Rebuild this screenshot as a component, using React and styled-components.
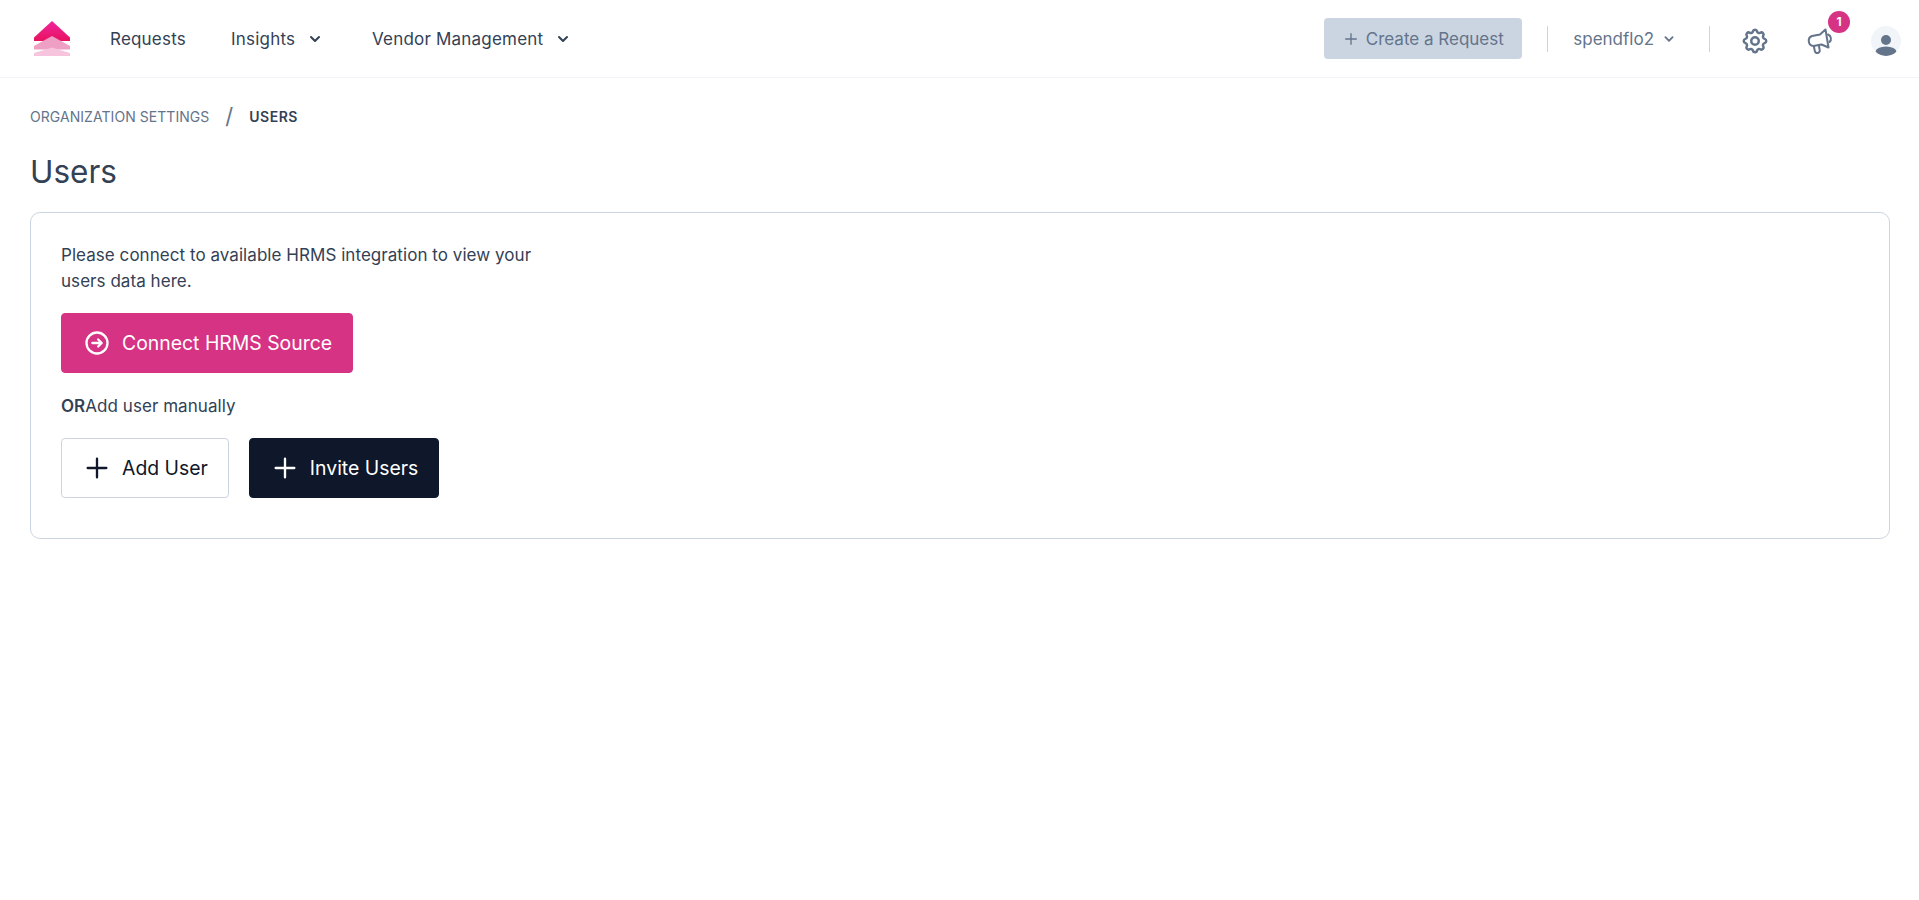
import React from "react";
import styled, { createGlobalStyle } from "styled-components";
import {
  HiOutlineCog,
  HiOutlineArrowCircleRight,
  HiOutlinePlus,
  HiChevronDown,
} from "react-icons/hi";

const GlobalStyle = createGlobalStyle`
  html, body {
    margin: 0;
    padding: 0;
    background: #fff;
    font-family: "Inter", "Noto Sans", sans-serif;
    color: #334155;
  }
  * { box-sizing: border-box; }
`;

const Logo = () => (
  <LogoSvg viewBox="0 0 36 35" aria-label="logo">
    <defs>
      <linearGradient id="topArrow" x1="0" y1="0" x2="0" y2="1">
        <stop offset="0" stopColor="#f0249f" />
        <stop offset="1" stopColor="#e8125f" />
      </linearGradient>
    </defs>
    <path d="M18 0 L36 16.5 V20 H0 V16.5 Z" fill="url(#topArrow)" />
    <path d="M18 15 L36 25 V28.5 H0 V25 Z" fill="#ee9fc4" />
    <path d="M18 26.5 L36 32 V35 H0 V32 Z" fill="#f6c4dd" />
  </LogoSvg>
);

const Megaphone = () => (
  <MegaphoneSvg viewBox="0 0 26 26" aria-label="announcements">
    <path d="M5 8 L13 6.5 L18.5 1.5 L21.5 19.5 L14.5 16.5 L6.5 18 A5.2 5.2 0 0 1 5 8 Z" />
    <path d="M6.8 18 L7.8 23 A2.5 2.5 0 0 0 12.7 22 L11.8 17" />
    <path d="M21 6.5 A4.5 4.5 0 0 1 22.5 14" />
  </MegaphoneSvg>
);

const Avatar = () => (
  <AvatarSvg viewBox="0 0 30 30" aria-label="user">
    <defs>
      <clipPath id="avatarClip">
        <circle cx="15" cy="15" r="15" />
      </clipPath>
    </defs>
    <circle cx="15" cy="15" r="15" fill="#f1f5f9" />
    <g clipPath="url(#avatarClip)" fill="#64748b">
      <circle cx="15" cy="14" r="5" />
      <ellipse cx="15" cy="26" rx="10.5" ry="5.5" />
    </g>
  </AvatarSvg>
);

const App = () => {
  return (
    <>
      <GlobalStyle />
      <Header>
        <Logo />
        <Nav>
          <NavItem $width="121px">Requests</NavItem>
          <NavItem $width="141px">
            Insights
            <NavChevron />
          </NavItem>
          <NavItem>
            Vendor Management
            <NavChevron />
          </NavItem>
        </Nav>
        <Actions>
          <CreateButton>
            <HiOutlinePlus />
            Create a Request
          </CreateButton>
          <Divider />
          <OrgSwitch>
            spendflo2
            <HiChevronDown />
          </OrgSwitch>
          <Divider $right="31px" />
          <IconSlot $size="30px">
            <HiOutlineCog />
          </IconSlot>
          <IconSlot $size="26px">
            <Megaphone />
            <Badge>1</Badge>
          </IconSlot>
          <Avatar />
        </Actions>
      </Header>

      <Main>
        <Breadcrumbs>
          <Crumb>ORGANIZATION SETTINGS</Crumb>
          <Slash>/</Slash>
          <Crumb $current>USERS</Crumb>
        </Breadcrumbs>
        <Title>Users</Title>
        <Card>
          <Message>
            Please connect to available HRMS integration to view your users data
            here.
          </Message>
          <Button $variant="pink">
            <HiOutlineArrowCircleRight />
            Connect HRMS Source
          </Button>
          <OrLine>
            <strong>OR</strong>Add user manually
          </OrLine>
          <ButtonRow>
            <Button $variant="outline">
              <HiOutlinePlus />
              Add User
            </Button>
            <Button $variant="dark">
              <HiOutlinePlus />
              Invite Users
            </Button>
          </ButtonRow>
        </Card>
      </Main>
    </>
  );
};

export default App;

const Header = styled.header`
  display: flex;
  align-items: center;
  height: 78px;
  padding: 0 18px 0 34px;
  border-bottom: 1px solid #f1f5f9;
`;

const LogoSvg = styled.svg`
  width: 36px;
  height: 35px;
  flex: none;
`;

const Nav = styled.nav`
  display: flex;
  align-items: center;
  margin-left: 40px;
`;

const NavItem = styled.div`
  display: flex;
  align-items: center;
  width: ${(p) => p.$width || "auto"};
  font-size: 17px;
  letter-spacing: 0.2px;
  color: #334155;
`;

const NavChevron = styled(HiChevronDown)`
  width: 20px;
  height: 20px;
  margin-left: 10px;
  color: #334155;
`;

const Actions = styled.div`
  display: flex;
  align-items: center;
  margin-left: auto;
`;

const CreateButton = styled.div`
  display: flex;
  align-items: center;
  justify-content: center;
  gap: 7px;
  width: 198px;
  height: 41px;
  border-radius: 4px;
  background: #cbd5e1;
  color: #64748b;
  font-size: 17px;

  svg {
    width: 16px;
    height: 16px;
  }
`;

const Divider = styled.div`
  width: 1px;
  height: 26px;
  margin: 0 ${(p) => p.$right || "25px"} 0 25px;
  background: #cbd5e1;
`;

const OrgSwitch = styled.div`
  display: flex;
  align-items: center;
  gap: 6px;
  margin-right: 6px;
  font-size: 17px;
  color: #64748b;

  svg {
    width: 18px;
    height: 18px;
  }
`;

const IconSlot = styled.div`
  position: relative;
  display: flex;
  justify-content: center;
  width: 28px;
  margin: 4px 37px 0 0;
  color: #64748b;

  > svg {
    width: ${(p) => p.$size};
    height: ${(p) => p.$size};
    flex: none;
  }
`;

const MegaphoneSvg = styled.svg`
  fill: none;
  stroke: #64748b;
  stroke-width: 2;
  stroke-linejoin: round;
  stroke-linecap: round;
`;

const Badge = styled.span`
  position: absolute;
  top: -17px;
  right: -16px;
  width: 22px;
  height: 22px;
  border-radius: 50%;
  background: #d63384;
  color: #fff;
  font-size: 12px;
  font-weight: 700;
  line-height: 22px;
  text-align: center;
`;

const AvatarSvg = styled.svg`
  width: 30px;
  height: 30px;
  margin-top: 4px;
  flex: none;
`;

const Main = styled.main`
  padding: 28px 29px 0 30px;
`;

const Breadcrumbs = styled.div`
  display: flex;
  align-items: center;
  height: 20px;
`;

const Crumb = styled.span`
  font-size: 14px;
  font-weight: ${(p) => (p.$current ? 600 : 400)};
  letter-spacing: ${(p) => (p.$current ? "0.5px" : "0.05px")};
  color: ${(p) => (p.$current ? "#334155" : "#64748b")};
`;

const Slash = styled.span`
  margin: 0 16px;
  font-size: 22px;
  color: #64748b;
`;

const Title = styled.h1`
  margin: 28px 0 22px;
  font-size: 31.5px;
  font-weight: 400;
  line-height: 36px;
  color: #334155;
`;

const Card = styled.section`
  height: 327px;
  padding: 29px 30px;
  border: 1px solid #cbd5e1;
  border-radius: 10px;
`;

const Message = styled.p`
  width: 480px;
  margin: 0 0 19px;
  font-size: 17px;
  letter-spacing: 0.05px;
  line-height: 26px;
  color: #334155;
`;

const variants = {
  pink: "background: #d63384; color: #fff; border-color: #d63384;",
  outline: "background: #fff; color: #0f172a; border-color: #cbd5e1;",
  dark: "background: #0f172a; color: #fff; border-color: #0f172a;",
};

const Button = styled.button`
  display: inline-flex;
  align-items: center;
  gap: 11px;
  height: 60px;
  padding: 0 20px 0 21px;
  border: 1px solid;
  border-radius: 4px;
  font-family: inherit;
  font-size: 19.4px;
  ${(p) => variants[p.$variant]}

  svg {
    width: 28px;
    height: 28px;
    flex: none;
  }
`;

const OrLine = styled.p`
  margin: 21px 0 20px;
  font-size: 17px;
  letter-spacing: 0.05px;
  line-height: 24px;
  color: #334155;

  strong {
    font-weight: 600;
  }
`;

const ButtonRow = styled.div`
  display: flex;
  gap: 20px;
`;
